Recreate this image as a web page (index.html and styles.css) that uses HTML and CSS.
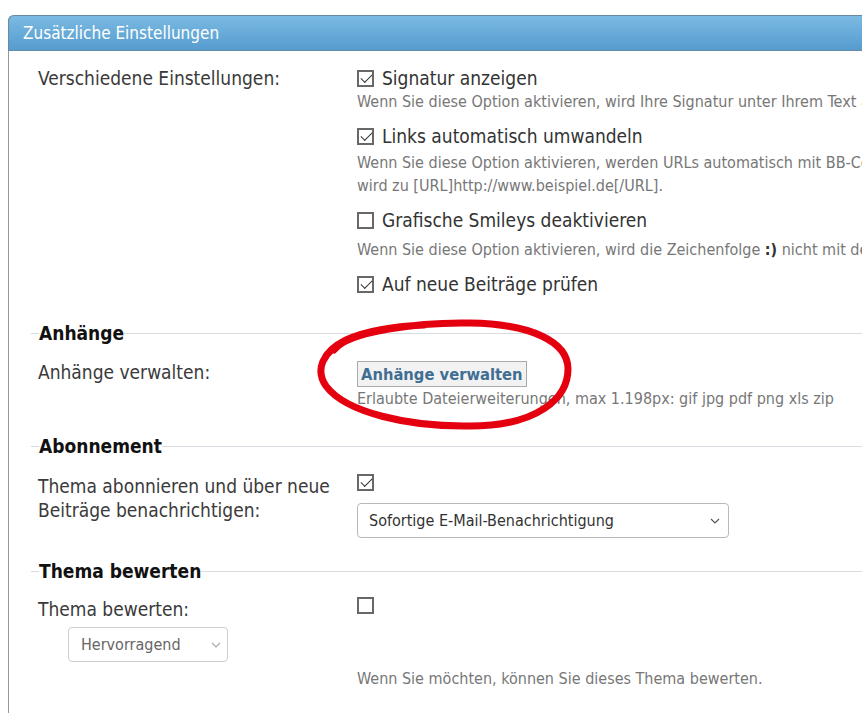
FILE: index.html
```html
<!DOCTYPE html>
<html lang="de">
<head>
    <meta charset="UTF-8">
    <title>Zusätzliche Einstellungen</title>
    <link rel="stylesheet" href="styles.css">
</head>
<body>
    <div class="panel">
        <div class="panel-head">Zusätzliche Einstellungen</div>
        <div class="panel-body">
            <div class="row">
                <div class="label">Verschiedene Einstellungen:</div>
                <div class="value">
                    <div class="option">
                        <div class="opt-line"><span class="cb checked"></span>Signatur anzeigen</div>
                        <div class="desc">Wenn Sie diese Option aktivieren, wird Ihre Signatur unter Ihrem Text angezeigt.</div>
                    </div>
                    <div class="option">
                        <div class="opt-line"><span class="cb checked"></span>Links automatisch umwandeln</div>
                        <div class="desc lower">Wenn Sie diese Option aktivieren, werden URLs automatisch mit BB-Code umschlossen: http://www.beispiel.de<br>wird zu [URL]http://www.beispiel.de[/URL].</div>
                    </div>
                    <div class="option">
                        <div class="opt-line"><span class="cb"></span>Grafische Smileys deaktivieren</div>
                        <div class="desc spaced">Wenn Sie diese Option aktivieren, wird die Zeichenfolge <b>:)</b> nicht mit dem grafischen Smiley ersetzt.</div>
                    </div>
                    <div class="option">
                        <div class="opt-line"><span class="cb checked"></span>Auf neue Beiträge prüfen</div>
                    </div>
                </div>
            </div>

            <fieldset class="group first">
                <legend>Anhänge</legend>
                <div class="row attach">
                    <div class="label">Anhänge verwalten:</div>
                    <div class="value">
                        <button class="btn">Anhänge verwalten</button>
                        <div class="desc">Erlaubte Dateierweiterungen, max 1.198px: gif jpg pdf png xls zip</div>
                    </div>
                </div>
            </fieldset>

            <fieldset class="group">
                <legend>Abonnement</legend>
                <div class="row subscribe">
                    <div class="label">Thema abonnieren und über neue Beiträge benachrichtigen:</div>
                    <div class="value">
                        <span class="cb checked"></span>
                        <div class="select wide">
                            <span>Sofortige E-Mail-Benachrichtigung</span>
                            <svg width="10" height="6" viewBox="0 0 10 6"><path d="M1 1l4 4 4-4" fill="none" stroke="#555" stroke-width="1.2"/></svg>
                        </div>
                    </div>
                </div>
            </fieldset>

            <fieldset class="group">
                <legend>Thema bewerten</legend>
                <div class="row rate">
                    <div class="label">
                        Thema bewerten:
                        <div class="select small muted">
                            <span>Hervorragend</span>
                            <svg width="10" height="6" viewBox="0 0 10 6"><path d="M1 1l4 4 4-4" fill="none" stroke="#aaa" stroke-width="1.2"/></svg>
                        </div>
                    </div>
                    <div class="value">
                        <span class="cb"></span>
                        <div class="desc rate-desc">Wenn Sie möchten, können Sie dieses Thema bewerten.</div>
                    </div>
                </div>
            </fieldset>
        </div>
    </div>

    <!-- hand drawn marker round the button -->
    <svg class="marker" width="862" height="713" viewBox="0 0 862 713">
        <path d="M334 350 C348 331 420 322 470 323 C532 324 568 342 568 369 C568 398 538 426 470 426 C410 427 346 413 326 386 C315 370 322 352 346 340 C370 329 400 326 424 325"
              fill="none" stroke="#e4000f" stroke-width="7" stroke-linecap="round" stroke-linejoin="round"/>
    </svg>
</body>
</html>
```

FILE: styles.css
```css
* {
    margin: 0;
    padding: 0;
    box-sizing: border-box;
}
html, body {
    overflow: hidden;
}
body {
    font-family: 'DejaVu Sans Condensed', 'DejaVu Sans', sans-serif;
    color: #3a3a3a;
    background-color: #fff;
    width: 862px;
    height: 713px;
    position: relative;
}
.panel {
    margin: 15px 0 0 8px;
    width: 1100px;
    border-left: 1px solid #8e9aa5;
    border-top-left-radius: 6px;
    min-height: 720px;
}
.panel-head {
    height: 36px;
    margin-left: -1px;
    padding: 0 0 0 14px;
    display: flex;
    align-items: center;
    color: #fff;
    font-size: 17px;
    background: linear-gradient(#7bbae2, #559ccf);
    border: 1px solid #6a8aa3;
    border-right: none;
    border-top-left-radius: 6px;
}
.panel-body {
    padding: 15px 0 0 29px;
}
.row {
    display: grid;
    grid-template-columns: 319px 1fr;
}
.label {
    font-size: 19px;
    line-height: 24px;
    color: #3a3a3a;
}
.value {
    font-size: 19px;
}
.option {
    margin-bottom: 11px;
}
.opt-line {
    display: flex;
    align-items: center;
    height: 24px;
    line-height: 24px;
    color: #333;
    white-space: nowrap;
}
.cb {
    display: inline-block;
    position: relative;
    width: 17px;
    height: 17px;
    border: 2px solid #686868;
    margin-right: 8px;
    flex: none;
}
.cb.checked::after {
    content: "";
    position: absolute;
    left: 2px;
    top: 2px;
    width: 10px;
    height: 5px;
    border-left: 1.8px solid #333;
    border-bottom: 1.8px solid #333;
    transform: rotate(-45deg);
}
.desc {
    font-size: 16px;
    line-height: 23px;
    color: #777;
    white-space: nowrap;
}
.desc b {
    color: #333;
}
.desc.lower {
    margin-top: 3px;
}
.desc.spaced {
    margin-top: 6px;
}
.group {
    border: none;
    border-top: 1px solid #d6dce2;
    margin-left: -7px;
    padding: 0 0 0 7px;
    margin-top: 24px;
}
.group.first {
    margin-top: 14px;
}
.group legend {
    font-size: 19px;
    font-weight: bold;
    color: #111;
    padding: 0;
    margin-left: 1px;
    line-height: 24px;
}
.attach {
    margin-top: 15px;
}
.btn {
    font-family: inherit;
    font-size: 16.4px;
    font-weight: bold;
    color: #3f6e92;
    background-color: #f2f2f2;
    border: 1px solid #aaa;
    height: 26px;
    padding: 0 3px;
    margin-top: 1px;
    display: block;
}
.subscribe {
    margin-top: 16px;
}
.subscribe .cb {
    display: block;
}
.select {
    display: flex;
    align-items: center;
    justify-content: space-between;
    border: 1px solid #b9b9b9;
    border-radius: 4px;
    font-size: 16px;
    color: #333;
    background-color: #fff;
}
.select.wide {
    width: 372px;
    height: 35px;
    padding: 0 8px 0 11px;
    margin-top: 12px;
}
.select.small {
    width: 160px;
    height: 35px;
    padding: 0 6px 0 12px;
    margin: 6px 0 0 30px;
}
.select.muted {
    color: #666;
    border-color: #cfcfcf;
}
.group:last-child {
    margin-top: 21px;
}
.rate {
    margin-top: 14px;
}
.rate .cb {
    display: block;
}
.rate-desc {
    margin-top: 53px;
}
.marker {
    position: absolute;
    left: 0;
    top: 0;
    pointer-events: none;
}
```
